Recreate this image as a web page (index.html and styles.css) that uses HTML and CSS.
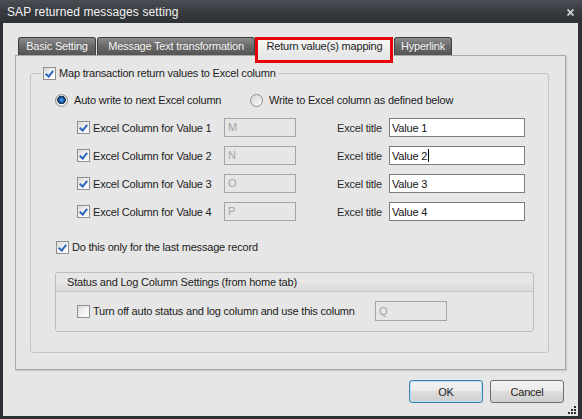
FILE: index.html
```html
<!DOCTYPE html>
<html lang="en">
    <head>
        <meta charset="UTF-8">
        <title>SAP returned messages setting</title>
        <link rel="stylesheet" href="styles.css">
    </head>
    <body>
        <div class="window">
            <div class="titlebar">
                <span class="title">SAP returned messages setting</span>
                <svg class="close" width="7" height="7" viewBox="0 0 7 7">
                    <path d="M0.5 0.5 L6.5 6.5 M6.5 0.5 L0.5 6.5" stroke="#cfd1d4" stroke-width="1.8" fill="none"/>
                </svg>
            </div>
            <div class="client">
                <!-- Tab strip -->
                <div class="tabs">
                    <div class="tab tab-basic">Basic Setting</div>
                    <div class="tab tab-text">Message Text transformation</div>
                    <div class="tab tab-return active">Return value(s) mapping</div>
                    <div class="tab tab-link">Hyperlink</div>
                </div>

                <div class="panel">
                    <fieldset class="group">
                        <legend><span class="check on"></span>Map transaction return values to Excel column</legend>
                        <div class="group-body">
                            <div class="radios">
                                <label class="radio-label first"><span class="radio on"></span>Auto write to next Excel column</label>
                                <label class="radio-label"><span class="radio"></span>Write to Excel column as defined below</label>
                            </div>

                            <div class="rows">
                                <div class="row">
                                    <label class="row-label"><span class="check on"></span>Excel Column for Value 1</label>
                                    <div class="col-input">M</div>
                                    <span class="title-label">Excel title</span>
                                    <div class="title-input">Value 1</div>
                                </div>
                                <div class="row">
                                    <label class="row-label"><span class="check on"></span>Excel Column for Value 2</label>
                                    <div class="col-input">N</div>
                                    <span class="title-label">Excel title</span>
                                    <div class="title-input">Value 2<span class="caret"></span></div>
                                </div>
                                <div class="row">
                                    <label class="row-label"><span class="check on"></span>Excel Column for Value 3</label>
                                    <div class="col-input">O</div>
                                    <span class="title-label">Excel title</span>
                                    <div class="title-input">Value 3</div>
                                </div>
                                <div class="row">
                                    <label class="row-label"><span class="check on"></span>Excel Column for Value 4</label>
                                    <div class="col-input">P</div>
                                    <span class="title-label">Excel title</span>
                                    <div class="title-input">Value 4</div>
                                </div>
                            </div>

                            <label class="last-only"><span class="check on"></span>Do this only for the last message record</label>

                            <div class="subgroup">
                                <div class="subgroup-head">Status and Log Column Settings (from home tab)</div>
                                <div class="subgroup-body">
                                    <label class="sub-label"><span class="check"></span>Turn off auto status and log column and use this column</label>
                                    <div class="col-input">Q</div>
                                </div>
                            </div>
                        </div>
                    </fieldset>
                </div>

                <div class="buttons">
                    <button class="btn default">OK</button>
                    <button class="btn">Cancel</button>
                </div>
                <span class="grip"></span>
            </div>
        </div>
    </body>
</html>
```

FILE: styles.css
```css
/* Base page setup */
*, *::before, *::after {
    box-sizing: border-box;
}

body {
    margin: 0;
    font-family: "Liberation Sans", Arial, sans-serif;
    font-size: 11px;
    letter-spacing: -0.2px;
    color: #1c1c1c;
}

/* Dark window frame */
.window {
    width: 582px;
    height: 419px;
    background-color: #2c2f34;
    display: flex;
    flex-direction: column;
}

.titlebar {
    height: 23px;
    padding: 0 8px 0 7px;
    display: flex;
    align-items: center;
    justify-content: space-between;
    background: linear-gradient(#4b4e54, #383b40 50%, #2e3136);
    color: #f3f3f3;
    font-size: 12px;
    letter-spacing: 0.1px;
}

.close {
    margin-top: 1px;
}

.client {
    position: relative;
    flex: 1;
    margin: 0 4px 3px 3px;
    padding: 14px 12px 0 12px;
    background-color: #e6e6e6;
}

/* Tabs */
.tabs {
    position: relative;
    z-index: 1;
    display: flex;
    align-items: flex-start;
    height: 18px;
    padding-left: 3px;
}

.tab {
    height: 18px;
    margin-right: 1px;
    border: 1px solid #3e3e3e;
    border-bottom: none;
    border-radius: 3px 3px 0 0;
    background: linear-gradient(#8d8d8d, #6a6a6a 45%, #555555);
    color: #f4f4f4;
    line-height: 17px;
    text-align: center;
}

.tab-basic { width: 78px; }
.tab-text { width: 158px; }
.tab-return { width: 137px; }
.tab-link { width: 58px; }

.tab.active {
    position: relative;
    height: 19px;
    border-color: #a9a9a9;
    background: linear-gradient(#f8f8f8, #e6e6e6);
    color: #1c1c1c;
}

/* Red highlight drawn round the current tab */
.tab.active::after {
    content: "";
    position: absolute;
    left: -2px;
    top: -1px;
    width: 138px;
    height: 26px;
    border: 3px solid #e5000a;
}

.panel {
    height: 315px;
    padding: 10px 16px 0 14px;
    border: 1px solid #a9a9a9;
    box-shadow: 1px 1px 1px rgba(0, 0, 0, 0.12);
    background-color: #e6e6e6;
}

/* Group boxes */
.group {
    margin: 0;
    padding: 0;
    min-width: 0;
    border: 1px solid #c4c4c4;
    border-radius: 3px;
}

.group legend {
    display: flex;
    align-items: center;
    gap: 3px;
    height: 14px;
    margin-left: 10px;
    padding: 0 2px;
}

.group-body {
    padding: 13px 14px 20px 24px;
}

/* Fake checkbox and radio */
.check {
    position: relative;
    flex: none;
    width: 13px;
    height: 13px;
    border: 1px solid #8f8f8f;
    background: linear-gradient(135deg, #d9d9d9, #f5f5f5 60%, #ffffff);
}

.check.on::after {
    content: "";
    position: absolute;
    left: 3px;
    top: 1px;
    width: 5px;
    height: 8px;
    border-right: 2px solid #2a66bd;
    border-bottom: 2px solid #2a66bd;
    transform: rotate(40deg);
}

.radio {
    flex: none;
    width: 13px;
    height: 13px;
    border: 1px solid #8f8f8f;
    border-radius: 50%;
    background: linear-gradient(135deg, #d6d6d6, #fafafa);
}

.radio.on {
    background: radial-gradient(circle at 50% 45%, #6fb6f0 0, #1f66b8 2px, #0b3d7a 3.5px, #2a2a2a 4px, transparent 4.5px),
                linear-gradient(135deg, #d6d6d6, #fafafa);
}

.radios {
    display: flex;
    align-items: center;
    height: 14px;
}

.radio-label {
    display: flex;
    align-items: center;
    gap: 6px;
}

.radio-label.first {
    width: 195px;
}

/* Value rows */
.rows {
    display: flex;
    flex-direction: column;
    gap: 9px;
    margin-top: 11px;
    padding-left: 22px;
}

.row {
    display: flex;
    align-items: center;
    height: 19px;
}

.row-label {
    display: flex;
    align-items: center;
    gap: 3px;
    width: 147px;
}

.col-input {
    width: 72px;
    height: 19px;
    padding: 0 3px;
    border: 1px solid #a5a5a5;
    background-color: #e6e6e6;
    color: #a3a3a3;
    line-height: 17px;
}

.title-label {
    width: 52px;
    margin-left: 41px;
    color: #2a2a2a;
}

.title-input {
    width: 136px;
    height: 19px;
    padding: 0 2px;
    border: 1px solid #7d7d7d;
    background-color: #fff;
    color: #111;
    line-height: 18px;
}

.caret {
    display: inline-block;
    width: 1px;
    height: 13px;
    margin-left: 1px;
    vertical-align: -2px;
    background-color: #000;
}

.last-only {
    display: flex;
    align-items: center;
    gap: 3px;
    height: 14px;
    margin-top: 19px;
    padding-left: 1px;
}

/* Status and log box */
.subgroup {
    height: 60px;
    margin-top: 18px;
    border: 1px solid #bebebe;
    border-radius: 3px;
}

.subgroup-head {
    height: 19px;
    padding-left: 11px;
    border-bottom: 1px solid #c8c8c8;
    border-radius: 3px 3px 0 0;
    background: linear-gradient(#e6e6e6 45%, #dadada);
    line-height: 18px;
}

.subgroup-body {
    display: flex;
    align-items: center;
    padding: 9px 0 0 21px;
}

.subgroup-body .col-input {
    height: 20px;
    line-height: 18px;
}

.sub-label {
    display: flex;
    align-items: center;
    gap: 3px;
    width: 298px;
}

/* Dialog buttons */
.buttons {
    display: flex;
    justify-content: flex-end;
    gap: 7px;
    margin-top: 10px;
    padding-right: 2px;
}

.btn {
    width: 74px;
    height: 23px;
    padding: 0;
    border: 1px solid #707070;
    border-radius: 3px;
    background: linear-gradient(#f3f3f3, #ebebeb 45%, #dddddd 50%, #cfcfcf);
    font-family: inherit;
    font-size: 11px;
    letter-spacing: -0.2px;
    color: #1c1c1c;
}

.btn.default {
    border-color: #3c7fb1;
    box-shadow: inset 0 0 0 1px #b9e0f6;
}

/* Resize grip in the corner */
.grip {
    position: absolute;
    right: 2px;
    bottom: 2px;
    width: 2px;
    height: 2px;
    background-color: #2c2c2c;
    box-shadow: -3px 0 #2c2c2c, -6px 0 #2c2c2c, 0 -3px #2c2c2c, -3px -3px #2c2c2c, 0 -6px #2c2c2c;
}
```
